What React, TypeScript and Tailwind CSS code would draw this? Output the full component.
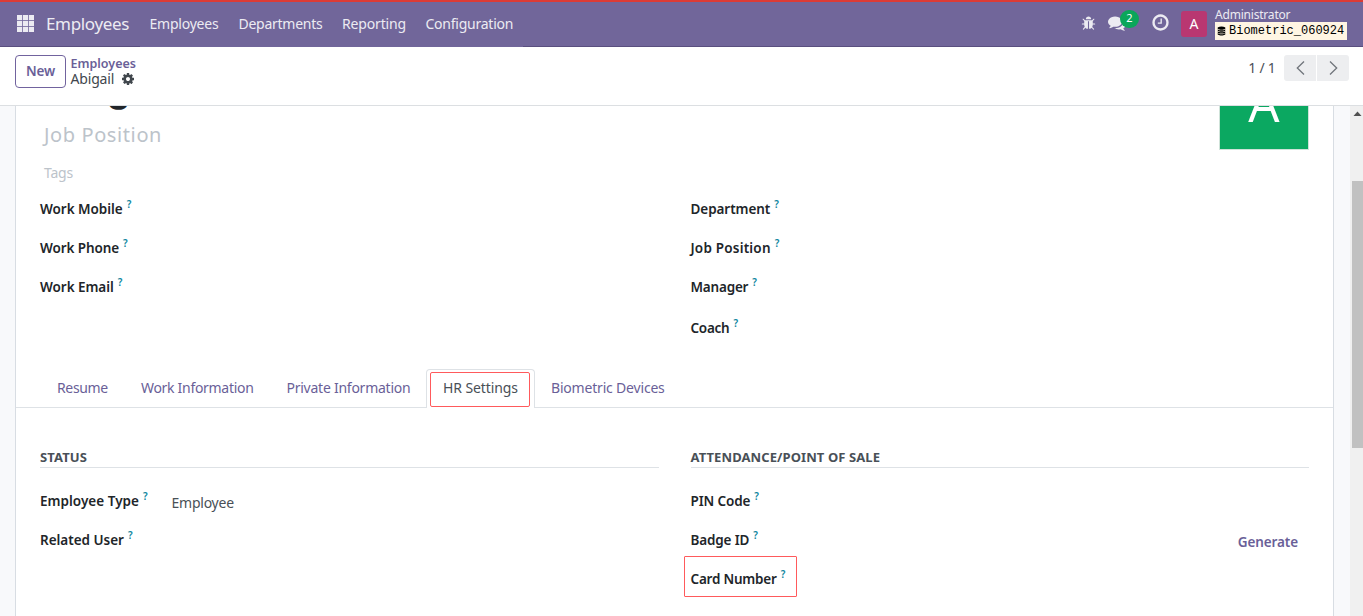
import React from "react";

const PATHS = {
  bug: "M1696 960q0 26-19 45t-45 19h-224q0 171-67 290l208 209q19 19 19 45t-19 45q-18 19-45 19t-45-19l-198-197q-5 5-15 13t-42 28.5-65 36.5-82 29-97 13v-896h-128v896q-51 0-101.5-13.5t-87-33-66-39-43.5-32.5l-15-14-183 207q-20 21-48 21-24 0-43-16-19-18-20.5-44.5t15.5-46.5l202-227q-58-114-58-274h-224q-26 0-45-19t-19-45 19-45 45-19h224v-294l-173-173q-19-19-19-45t19-45 45-19 45 19l173 173h844l173-173q19-19 45-19t45 19 19 45-19 45l-173 173v294h224q26 0 45 19t19 45zm-480-576h-640q0-133 93.5-226.5t226.5-93.5 226.5 93.5 93.5 226.5z",
  comments:
    "M1408 768q0 139-94 257t-256.5 186.5-353.5 68.5q-86 0-176-16-124 88-278 128-36 9-86 16h-3q-11 0-20.5-8t-11.5-21q-1-3-1-6.5t.5-6.5 2-6l2.5-5 3.5-5.5 4-5 4.5-5 4-4.5q5-6 23-25t26-29.5 22.5-29 25-38.5 20.5-44q-124-72-195-177t-71-224q0-139 94-257t256.5-186.5 353.5-68.5 353.5 68.5 256.5 186.5 94 257zm384 256q0 120-71 224.5t-195 176.5q10 24 20.5 44t25 38.5 22.5 29 26 29.5 23 25q1 1 4 4.5t4.5 5 4 5 3.5 5.5l2.5 5 2 6 .5 6.5-1 6.5q-3 14-13 22t-22 7q-50-7-86-16-154-40-278-128-90 16-176 16-271 0-472-132 58 4 88 4 161 0 309-45t264-129q125-92 192-212t67-254q0-77-23-152 129 71 204 178t75 230z",
  clock:
    "M1024 544v448q0 14-9 23t-23 9h-320q-14 0-23-9t-9-23v-64q0-14 9-23t23-9h224v-352q0-14 9-23t23-9h64q14 0 23 9t9 23zm416 352q0-148-73-273t-198-198-273-73-273 73-198 198-73 273 73 273 198 198 273 73 273-73 198-198 73-273zm224 0q0 209-103 385.5t-279.5 279.5-385.5 103-385.5-103-279.5-279.5-103-385.5 103-385.5 279.5-279.5 385.5-103 385.5 103 279.5 279.5 103 385.5z",
  cog: "M1152 896q0-106-75-181t-181-75-181 75-75 181 75 181 181 75 181-75 75-181zm512-109v222q0 12-8 23t-20 13l-185 28q-19 54-39 91 35 50 107 138 10 12 10 25t-9 23q-27 37-99 108t-94 71q-12 0-26-9l-138-108q-44 23-91 38-16 136-29 186-7 28-36 28h-222q-14 0-24.5-8.5t-11.5-21.5l-28-184q-49-16-90-37l-141 107q-10 9-25 9-14 0-25-11-126-114-165-168-7-10-7-23 0-12 8-23 15-21 51-66.5t54-70.5q-27-50-41-99l-183-27q-13-2-21-12.5t-8-23.5v-222q0-12 8-23t19-13l186-28q14-46 39-92-40-57-107-138-10-12-10-24 0-10 9-23 26-36 98.5-107.5t94.5-71.5q13 0 26 10l138 107q44-23 91-38 16-136 29-186 7-28 36-28h222q14 0 24.5 8.5t11.5 21.5l28 184q49 16 90 37l142-107q9-9 24-9 13 0 25 10 129 119 165 170 7 8 7 22 0 12-8 23-15 21-51 66.5t-54 70.5q26 50 41 98l183 28q13 2 21 12.5t8 23.5z",
  database:
    "M896 768q237 0 443-43t325-127v170q0 69-103 128t-280 93.5-385 34.5-385-34.5-280-93.5-103-128v-170q119 84 325 127t443 43zm0 768q237 0 443-43t325-127v170q0 69-103 128t-280 93.5-385 34.5-385-34.5-280-93.5-103-128v-170q119 84 325 127t443 43zm0-384q237 0 443-43t325-127v170q0 69-103 128t-280 93.5-385 34.5-385-34.5-280-93.5-103-128v-170q119 84 325 127t443 43zm0-1152q208 0 385 34.5t280 93.5 103 128v128q0 69-103 128t-280 93.5-385 34.5-385-34.5-280-93.5-103-128v-128q0-69 103-128t280-93.5 385-34.5z",
};

function Icon({ name, className }: { name: keyof typeof PATHS; className: string }) {
  return (
    <svg viewBox="0 0 1792 1792" fill="currentColor" className={`shrink-0 ${className}`}>
      <path d={PATHS[name]} />
    </svg>
  );
}

function AppsIcon() {
  return (
    <svg width="17" height="17" viewBox="0 0 17 17" fill="currentColor" className="shrink-0">
      {[0, 6, 12].map((y) => [0, 6, 12].map((x) => <rect key={`${x}-${y}`} x={x} y={y} width="5.2" height="5.2" />))}
    </svg>
  );
}

function NavBar() {
  return (
    <header className="flex h-[47px] shrink-0 border-t-2 border-[#dc3b35] bg-[#71669a] text-[#ecebf2]">
      <div className="flex w-[140px] items-center border-b border-[#5a4f7f] pb-px pl-[17px]">
        <AppsIcon />
        <span className="ml-3 text-[17px] tracking-[-0.35px]">Employees</span>
      </div>
      <nav className="flex w-[383px] items-center pb-px pl-[9.5px] text-sm">
        <a className="w-[89px] tracking-[-0.22px]">Employees</a>
        <a className="w-[103.5px] tracking-[-0.26px]">Departments</a>
        <a className="w-[83.5px] tracking-[-0.15px]">Reporting</a>
        <a className="tracking-[-0.24px]">Configuration</a>
      </nav>
      <div className="flex flex-1 items-center justify-end border-b border-[#5a4f7f] pr-4 pb-px">
        <Icon name="bug" className="h-[15px] w-[15px]" />
        <div className="relative mb-[2px] ml-3">
          <Icon name="comments" className="h-[18px] w-[18px]" />
          <span className="absolute -top-[4px] left-[12px] flex h-[18px] w-[19px] items-center justify-center rounded-full bg-[#0aa65a] text-[11px] text-white">
            2
          </span>
        </div>
        <Icon name="clock" className="mb-[2px] ml-[25px] h-[19px] w-[19px]" />
        <div className="ml-[11px] flex h-[26px] w-[26px] items-center justify-center rounded-[3px] bg-[#b93771] text-sm text-white">A</div>
        <div className="ml-[8px] flex flex-col items-start">
          <span className="text-xs leading-[15px] tracking-[-0.2px]">Administrator</span>
          <span className="flex h-[18px] w-[132px] items-center bg-[#fff5e3] pl-[2px] font-['Liberation_Mono',monospace] text-xs text-black">
            <Icon name="database" className="mr-[3px] h-[10px] w-[9px]" />
            <span>Biometric_060924</span>
          </span>
        </div>
      </div>
    </header>
  );
}

function ControlPanel() {
  return (
    <div className="z-10 flex h-[59px] shrink-0 items-start justify-between border-b border-[#dcdfe2] bg-white pr-[14px] pl-[15px]">
      <div className="flex items-start">
        <button className="mt-2 h-[33px] w-[51px] rounded-[4px] border border-[#71639e] text-[13.5px] font-semibold tracking-[-0.1px] text-[#6a5f98]">
          New
        </button>
        <div className="mt-[8px] ml-[4.5px] flex flex-col text-sm leading-[16px]">
          <a className="-mb-px pt-px text-[12.5px] font-semibold text-[#6a5f98]">Employees</a>
          <span className="flex items-center text-[#41474d]">
            <span className="tracking-[-0.17px]">Abigail</span>
            <Icon name="cog" className="ml-[7px] h-[14px] w-[14px]" />
          </span>
        </div>
      </div>
      <div className="mt-[8px] flex h-[26px] items-center text-[#4b5058]">
        <span className="mr-[8.5px] text-sm tracking-[-0.25px]">1 / 1</span>
        <div className="flex gap-px text-[#70757b]">
          <button className="flex h-[26px] w-8 items-center justify-center rounded-l-[3px] bg-[#edeef0]">
            <svg width="9" height="14" viewBox="0 0 9 14" fill="none" stroke="currentColor" strokeWidth="1.3">
              <path d="M8 .5 1.3 7 8 13.5" />
            </svg>
          </button>
          <button className="flex h-[26px] w-8 items-center justify-center rounded-r-[3px] bg-[#edeef0]">
            <svg width="9" height="14" viewBox="0 0 9 14" fill="none" stroke="currentColor" strokeWidth="1.3">
              <path d="M1 .5 7.7 7 1 13.5" />
            </svg>
          </button>
        </div>
      </div>
    </div>
  );
}

function Label({ text, className }: { text: string; className: string }) {
  return (
    <div className="flex h-[39px] items-center text-[13.5px] font-semibold whitespace-nowrap text-[#212529]">
      <span className={`pt-[2px] ${className}`}>{text}</span>
      <span className="mb-[9px] ml-[4px] text-[10px] leading-none text-[#0e86a0]">?</span>
    </div>
  );
}

function SectionTitle({ text, className }: { text: string; className: string }) {
  return (
    <h2 className={`mb-[13px] flex h-[21px] items-center border-b border-[#dee2e6] pt-[2px] text-[13px] font-bold text-[#495057] ${className}`}>
      {text}
    </h2>
  );
}

function Tabs() {
  return (
    <div className="mt-[22px] flex h-[39px] text-sm text-[#6a5f98]">
      <div className="flex w-[410px] items-center border-b border-[#dee2e6] pl-[41px]">
        <a className="w-[84px] tracking-[-0.35px]">Resume</a>
        <a className="w-[145.5px] tracking-[-0.3px]">Work Information</a>
        <a className="tracking-[-0.25px] whitespace-nowrap">Private Information</a>
      </div>
      <div className="flex w-[109px] rounded-t-[4px] border border-b-0 border-[#dee2e6] pt-[2px] pl-[3px] text-[#495057]">
        <a className="flex h-[35px] w-[100px] items-center justify-center rounded-[2px] border-[1.5px] border-[#ff5a5c] pb-[3px] pl-px tracking-[-0.1px]">
          HR Settings
        </a>
      </div>
      <div className="flex flex-1 items-center border-b border-[#dee2e6] pl-4">
        <a className="tracking-[-0.19px]">Biometric Devices</a>
      </div>
    </div>
  );
}

function Sheet() {
  return (
    <main className="mx-[15px] w-[1319px] border-x border-[#d8dde3] bg-white">
      <div className="flex h-[83px] justify-between pr-6 pl-6">
        <div className="pl-[4px] text-[#bcc3ca]">
          <h1 className="-mt-[28px] ml-[4px] h-[22px] font-['Inter',sans-serif] text-[36px] leading-[22px] font-bold text-[#212529]">
            Abigail
          </h1>
          <div className="mt-[22px] text-xl leading-[26px] tracking-[0.6px]">Job Position</div>
          <div className="mt-[15px] text-sm leading-5 tracking-[-0.2px]">Tags</div>
        </div>
        <div className="flex h-[44px] w-[90px] justify-center border border-t-0 border-[#cfe3d9] bg-[#0ba861] text-white">
          <span className="-mt-[33px] h-[60px] text-[49px] leading-[60px]">A</span>
        </div>
      </div>
      <div className="grid grid-cols-2 px-6">
        <div className="pr-[17px]">
          <Label text="Work Mobile" className="tracking-[-0.04px]" />
          <Label text="Work Phone" className="tracking-[-0.1px]" />
          <Label text="Work Email" className="tracking-[-0.05px]" />
        </div>
        <div className="pl-[16px]">
          <Label text="Department" className="tracking-[-0.07px]" />
          <Label text="Job Position" className="tracking-[0.2px]" />
          <Label text="Manager" className="tracking-[-0.2px]" />
          <div className="mt-[2px]">
            <Label text="Coach" className="tracking-[-0.25px]" />
          </div>
        </div>
      </div>
      <Tabs />
      <div className="grid grid-cols-2 px-6 pt-[39px]">
        <div className="pr-[16px]">
          <SectionTitle text="STATUS" className="tracking-[0.11px]" />
          <div className="flex items-center">
            <div className="w-[131.5px]">
              <Label text="Employee Type" className="tracking-[0.02px]" />
            </div>
            <span className="mt-[4px] text-sm tracking-[-0.24px] text-[#495057]">Employee</span>
          </div>
          <Label text="Related User" className="tracking-[-0.02px]" />
        </div>
        <div className="pl-[16px]">
          <SectionTitle text="ATTENDANCE/POINT OF SALE" className="tracking-[0.09px]" />
          <Label text="PIN Code" className="tracking-[-0.12px]" />
          <div className="flex items-center justify-between pr-[11px]">
            <Label text="Badge ID" className="tracking-[-0.15px]" />
            <button className="mt-[6px] text-[13.5px] font-semibold tracking-[-0.1px] text-[#6a5f98]">Generate</button>
          </div>
          <div className="-mt-[3px] -ml-[7px] flex h-[41px] w-[113px] items-center rounded-[1px] border-[1.5px] border-[#ff5a5c] pt-[3px] pl-[6px]">
            <Label text="Card Number" className="tracking-[-0.22px]" />
          </div>
        </div>
      </div>
    </main>
  );
}

function Scrollbar() {
  return (
    <div className="ml-auto flex w-[13px] flex-col bg-[#f0f0f0] pl-[2px]">
      <svg width="11" height="15" viewBox="0 0 11 15" className="shrink-0 fill-[#505050]">
        <path d="M1.5 10 5.5 5.5 9.5 10z" />
      </svg>
      <div className="mt-[60px] h-[267px] bg-[#c1c1c1]" />
    </div>
  );
}

export default function App() {
  return (
    <div className="flex h-[616px] w-[1363px] flex-col overflow-hidden bg-[#f8f9fa] font-['Noto_Sans',sans-serif]">
      <NavBar />
      <ControlPanel />
      <div className="flex min-h-0 flex-1 overflow-hidden bg-[#f8f9fb]">
        <Sheet />
        <Scrollbar />
      </div>
    </div>
  );
}
